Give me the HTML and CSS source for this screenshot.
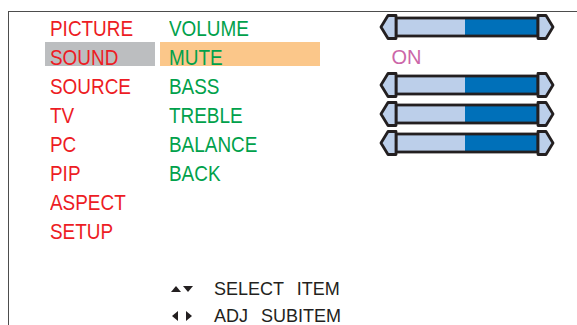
FILE: index.html
```html
<!DOCTYPE html>
<html lang="en">
<head>
  <meta charset="UTF-8">
  <meta name="viewport" content="width=device-width, initial-scale=1.0">
  <title>Sound menu</title>
  <link rel="stylesheet" href="styles.css">
</head>
<body>
  <div class="screen">
    <div class="menu">
      <ul class="list main">
        <li><span class="label">PICTURE</span></li>
        <li class="active"><span class="label">SOUND</span></li>
        <li><span class="label">SOURCE</span></li>
        <li><span class="label">TV</span></li>
        <li><span class="label">PC</span></li>
        <li><span class="label">PIP</span></li>
        <li><span class="label">ASPECT</span></li>
        <li><span class="label">SETUP</span></li>
      </ul>

      <ul class="list sub">
        <li><span class="label">VOLUME</span></li>
        <li class="active"><span class="label">MUTE</span></li>
        <li><span class="label">BASS</span></li>
        <li><span class="label">TREBLE</span></li>
        <li><span class="label">BALANCE</span></li>
        <li><span class="label">BACK</span></li>
      </ul>

      <ul class="list values">
        <li class="slider-row">
          <svg class="slider" width="176" height="26" viewBox="0 0 176 26">
            <rect x="17" y="4" width="142" height="18" fill="#bccfea"/>
            <rect x="86" y="4" width="73" height="18" fill="#0070b9"/>
            <rect x="17" y="4" width="142" height="18" fill="none" stroke="#231f20" stroke-width="2.8"/>
            <polygon points="17,1.5 9,1.5 2,13 9,24.5 17,24.5" fill="#bccfea" stroke="#231f20" stroke-width="2.8" stroke-linejoin="round"/>
            <polygon points="159,1.5 167,1.5 174,13 167,24.5 159,24.5" fill="#bccfea" stroke="#231f20" stroke-width="2.8" stroke-linejoin="round"/>
          </svg>
        </li>
        <li class="state">ON</li>
        <li class="slider-row">
          <svg class="slider" width="176" height="26" viewBox="0 0 176 26">
            <rect x="17" y="4" width="142" height="18" fill="#bccfea"/>
            <rect x="86" y="4" width="73" height="18" fill="#0070b9"/>
            <rect x="17" y="4" width="142" height="18" fill="none" stroke="#231f20" stroke-width="2.8"/>
            <polygon points="17,1.5 9,1.5 2,13 9,24.5 17,24.5" fill="#bccfea" stroke="#231f20" stroke-width="2.8" stroke-linejoin="round"/>
            <polygon points="159,1.5 167,1.5 174,13 167,24.5 159,24.5" fill="#bccfea" stroke="#231f20" stroke-width="2.8" stroke-linejoin="round"/>
          </svg>
        </li>
        <li class="slider-row">
          <svg class="slider" width="176" height="26" viewBox="0 0 176 26">
            <rect x="17" y="4" width="142" height="18" fill="#bccfea"/>
            <rect x="86" y="4" width="73" height="18" fill="#0070b9"/>
            <rect x="17" y="4" width="142" height="18" fill="none" stroke="#231f20" stroke-width="2.8"/>
            <polygon points="17,1.5 9,1.5 2,13 9,24.5 17,24.5" fill="#bccfea" stroke="#231f20" stroke-width="2.8" stroke-linejoin="round"/>
            <polygon points="159,1.5 167,1.5 174,13 167,24.5 159,24.5" fill="#bccfea" stroke="#231f20" stroke-width="2.8" stroke-linejoin="round"/>
          </svg>
        </li>
        <li class="slider-row">
          <svg class="slider" width="176" height="26" viewBox="0 0 176 26">
            <rect x="17" y="4" width="142" height="18" fill="#bccfea"/>
            <rect x="86" y="4" width="73" height="18" fill="#0070b9"/>
            <rect x="17" y="4" width="142" height="18" fill="none" stroke="#231f20" stroke-width="2.8"/>
            <polygon points="17,1.5 9,1.5 2,13 9,24.5 17,24.5" fill="#bccfea" stroke="#231f20" stroke-width="2.8" stroke-linejoin="round"/>
            <polygon points="159,1.5 167,1.5 174,13 167,24.5 159,24.5" fill="#bccfea" stroke="#231f20" stroke-width="2.8" stroke-linejoin="round"/>
          </svg>
        </li>
      </ul>
    </div>

    <div class="legend">
      <div class="hint">
        <span class="keys">
          <svg width="24" height="8" viewBox="0 0 24 8"><polygon points="0,7 5,1 10,7" fill="#231f20"/><polygon points="12,1 22,1 17,7" fill="#231f20"/></svg>
        </span>
        SELECT ITEM
      </div>
      <div class="hint">
        <span class="keys">
          <svg width="24" height="10" viewBox="0 0 24 10"><polygon points="7,0 7,10 1,5" fill="#231f20"/><polygon points="15,0 15,10 21,5" fill="#231f20"/></svg>
        </span>
        ADJ SUBITEM
      </div>
    </div>
  </div>
</body>
</html>
```

FILE: styles.css
```css
html, body {
  margin: 0;
  height: 100%;
  overflow: hidden;
  background: #fff;
}
body {
  font-family: 'Liberation Sans', Arial, sans-serif;
}
.screen {
  margin: 11px 0 0 8px;
  border-top: 1.5px solid #4d4d4d;
  border-left: 1.5px solid #4d4d4d;
  height: 320px;
  padding-left: 35.5px;
}
.menu {
  display: grid;
  grid-template-columns: 110px 160px 1fr;
  column-gap: 5px;
  padding-top: 0.5px;
}
.list {
  list-style: none;
  margin: 0;
  padding: 0;
  display: flex;
  flex-direction: column;
  gap: 5px;
}
.list li {
  height: 24px;
  line-height: 32px;
  font-size: 22px;
  white-space: nowrap;
}
.label {
  display: inline-block;
  transform: scaleX(0.86);
  transform-origin: left center;
}
.main li {
  color: #ed1c24;
  padding-left: 5px;
}
.main li.active {
  background: #bcbec0;
}
.sub li {
  color: #00a14b;
  padding-left: 9px;
}
.sub li.active {
  background: #fbc78a;
}
.values {
  padding-left: 54px;
}
.values .slider-row {
  line-height: normal;
}
.slider {
  display: block;
  margin-top: 1px;
}
.values .state {
  color: #cc66a8;
  font-size: 20px;
  line-height: 30px;
  padding-left: 13px;
}
.legend {
  margin: 36px 0 0 126.5px;
  font-size: 18px;
  line-height: 27px;
  color: #231f20;
}
.hint {
  display: flex;
  align-items: center;
  word-spacing: 8px;
}
.keys {
  display: inline-flex;
  width: 43px;
}
.keys svg {
  display: block;
}
```
